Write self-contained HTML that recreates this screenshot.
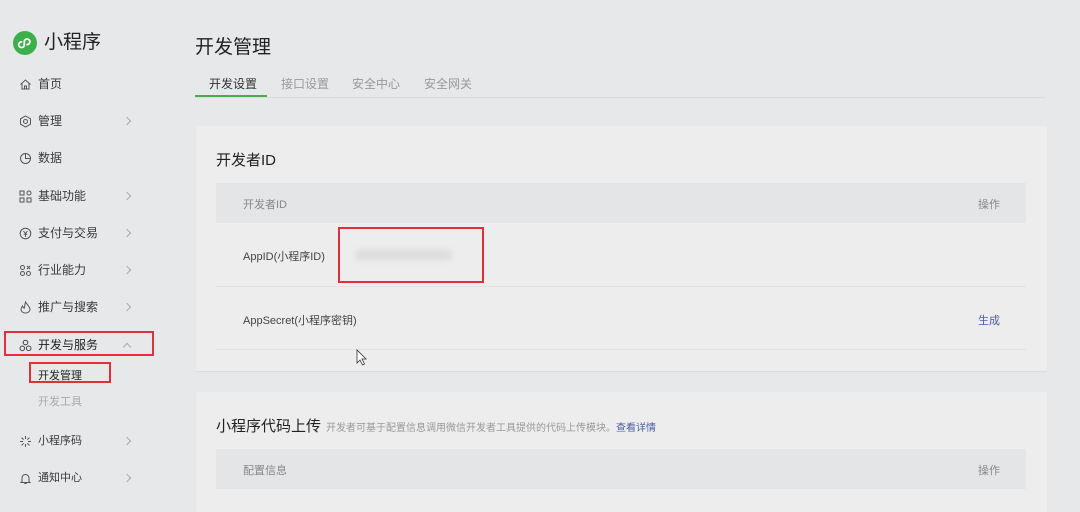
<!DOCTYPE html>
<html><head><meta charset="utf-8"><style>
*{margin:0;padding:0;box-sizing:border-box}
body{width:1080px;height:500px;background:#e7e8ea;font-family:"Liberation Sans","Noto Sans CJK SC",sans-serif;position:relative;overflow:hidden;color:#333}
.a{position:absolute;white-space:nowrap}
.nav{font-size:12px;color:#3a3a3a;left:38px;line-height:14px}
.ic{position:absolute;left:19px;width:13px;height:13px}
.chev{position:absolute;left:124px;width:6px;height:6px;border-right:1px solid #aaa;border-top:1px solid #aaa;transform:rotate(45deg)}
.card{position:absolute;left:196px;width:851px;background:#ededed;box-shadow:0 1px 1px rgba(0,0,0,.06)}
.th{position:absolute;left:20px;width:810px;height:40px;background:#e4e5e7}
.red{position:absolute;border:2px solid #e0303c}
</style></head><body>
<svg class="a" style="left:13px;top:31px" width="24" height="24" viewBox="0 0 24 24"><circle cx="12" cy="12" r="12" fill="#3cb04a"/><path d="M8.5 16.5a2.8 2.8 0 1 1 0-5.6 M8.5 16.5c1.8 0 2.8-1.2 2.8-2.8v-2.9c0-1.6 1.1-2.8 2.8-2.8a2.8 2.8 0 1 1 0 5.6" stroke="#fff" stroke-width="1.8" fill="none" stroke-linecap="round"/></svg>
<div class="a" style="left:44px;top:31px;font-size:19px;line-height:24px;color:#222">小程序</div>

<svg class="ic" style="top:78px" viewBox="0 0 13 13"><path d="M1.5 6.5L6.5 2l5 4.5M3 5.5V11h7V5.5M5.5 11V8h2v3" stroke="#555" fill="none"/></svg>
<div class="a nav" style="top:77px">首页</div>
<svg class="ic" style="top:115px" viewBox="0 0 13 13"><path d="M6.5 1l5 2.8v5.4l-5 2.8-5-2.8V3.8z" stroke="#555" fill="none"/><circle cx="6.5" cy="6.5" r="2" stroke="#555" fill="none"/></svg>
<div class="a nav" style="top:114px">管理</div><div class="chev" style="top:118px"></div>
<svg class="ic" style="top:152px" viewBox="0 0 13 13"><circle cx="6.5" cy="6.5" r="5" stroke="#555" fill="none"/><path d="M6.5 1.5v5h5" stroke="#555" fill="none"/></svg>
<div class="a nav" style="top:151px">数据</div>
<svg class="ic" style="top:190px" viewBox="0 0 13 13"><rect x="1" y="1" width="4" height="4" stroke="#555" fill="none"/><rect x="1" y="8" width="4" height="4" stroke="#555" fill="none"/><rect x="8" y="8" width="4" height="4" stroke="#555" fill="none"/><circle cx="10" cy="3" r="2" stroke="#555" fill="none"/></svg>
<div class="a nav" style="top:189px">基础功能</div><div class="chev" style="top:193px"></div>
<svg class="ic" style="top:227px" viewBox="0 0 13 13"><circle cx="6.5" cy="6.5" r="5.3" stroke="#555" fill="none"/><path d="M4.5 4l2 2.5 2-2.5M6.5 6.5V10M4.7 7.3h3.6" stroke="#555" fill="none"/></svg>
<div class="a nav" style="top:226px">支付与交易</div><div class="chev" style="top:230px"></div>
<svg class="ic" style="top:264px" viewBox="0 0 13 13"><circle cx="3.5" cy="3.5" r="2" stroke="#555" fill="none"/><circle cx="9.5" cy="9.5" r="2" stroke="#555" fill="none"/><circle cx="3.5" cy="9.5" r="2" stroke="#555" fill="none"/><path d="M8 2l3 3M11 2L8 5" stroke="#555"/></svg>
<div class="a nav" style="top:263px">行业能力</div><div class="chev" style="top:267px"></div>
<svg class="ic" style="top:301px" viewBox="0 0 13 13"><path d="M6.5 1C8 4 11 5.5 11 8.5a4.5 3.5 0 0 1-9 0C2 7 3 6 3.5 5c.5 1.5 1.5 2 2 2C5.5 5 6 3 6.5 1z" stroke="#555" fill="none"/></svg>
<div class="a nav" style="top:300px">推广与搜索</div><div class="chev" style="top:304px"></div>
<svg class="ic" style="top:339px" viewBox="0 0 13 13"><circle cx="6.5" cy="3.5" r="2.3" stroke="#444" fill="none"/><circle cx="3.3" cy="9.3" r="2.3" stroke="#444" fill="none"/><circle cx="9.7" cy="9.3" r="2.3" stroke="#444" fill="none"/></svg>
<div class="a nav" style="top:338px;color:#222">开发与服务</div><div class="chev" style="top:344px;transform:rotate(-45deg)"></div>
<div class="a" style="left:38px;top:367px;font-size:11px;color:#222">开发管理</div>
<div class="a" style="left:38px;top:393px;font-size:11px;color:#aaa">开发工具</div>
<svg class="ic" style="top:435px" viewBox="0 0 13 13"><path d="M6.5 1v3M6.5 9v3M1 6.5h3M9 6.5h3M2.6 2.6l2 2M8.4 8.4l2 2M2.6 10.4l2-2M8.4 4.6l2-2" stroke="#555"/></svg>
<div class="a nav" style="top:434px;font-size:11px">小程序码</div><div class="chev" style="top:438px"></div>
<svg class="ic" style="top:472px" viewBox="0 0 13 13"><path d="M3 9.5V6a3.5 3.5 0 0 1 7 0v3.5l1 1H2zM5.3 11.5h2.4" stroke="#555" fill="none"/></svg>
<div class="a nav" style="top:471px;font-size:11px">通知中心</div><div class="chev" style="top:475px"></div>

<div class="red" style="left:4px;top:331px;width:150px;height:25px"></div>
<div class="red" style="left:29px;top:362px;width:82px;height:21px"></div>

<div class="a" style="left:195px;top:32px;font-size:19px;color:#222">开发管理</div>
<div class="a" style="left:195px;top:97px;width:850px;height:1px;background:#dcdcde"></div>
<div class="a" style="left:209px;top:75px;font-size:12px;color:#333">开发设置</div>
<div class="a" style="left:195px;top:95px;width:72px;height:2px;background:#4bab4f"></div>
<div class="a" style="left:281px;top:75px;font-size:12px;color:#999">接口设置</div>
<div class="a" style="left:352px;top:75px;font-size:12px;color:#999">安全中心</div>
<div class="a" style="left:424px;top:75px;font-size:12px;color:#999">安全网关</div>

<div class="card" style="top:126px;height:245px">
  <div class="a" style="left:20px;top:23px;font-size:15px;color:#222">开发者ID</div>
  <div class="th" style="top:57px"></div>
  <div class="a" style="left:47px;top:70px;font-size:11px;color:#888">开发者ID</div>
  <div class="a" style="left:782px;top:70px;font-size:11px;color:#888">操作</div>
  <div class="a" style="left:47px;top:122px;font-size:11px;color:#444">AppID(小程序ID)</div>
  <div class="a" style="left:160px;top:124px;width:95px;height:10px;background:#dcdcdc;filter:blur(3px)"></div>
  <div class="a" style="left:20px;top:160px;width:810px;height:1px;background:#e2e2e2"></div>
  <div class="a" style="left:47px;top:186px;font-size:11px;color:#444">AppSecret(小程序密钥)</div>
  <div class="a" style="left:782px;top:186px;font-size:11px;color:#4a5ea0">生成</div>
  <div class="a" style="left:20px;top:223px;width:810px;height:1px;background:#e2e2e2"></div>
</div>
<div class="red" style="left:338px;top:227px;width:146px;height:56px"></div>
<svg class="a" style="left:356px;top:349px" width="12" height="18" viewBox="0 0 12 18"><path d="M1 1v13l3-3 2.5 5 2-1-2.5-5H10z" fill="#fff" stroke="#333" stroke-width="0.8"/></svg>

<div class="card" style="top:392px;height:120px">
  <div class="a" style="left:20px;top:23px;font-size:15px;color:#222">小程序代码上传</div>
  <div class="a" style="left:130px;top:27px;font-size:10px;color:#999">开发者可基于配置信息调用微信开发者工具提供的代码上传模块。<span style="color:#4a5ea0">查看详情</span></div>
  <div class="th" style="top:57px"></div>
  <div class="a" style="left:47px;top:70px;font-size:11px;color:#888">配置信息</div>
  <div class="a" style="left:782px;top:70px;font-size:11px;color:#888">操作</div>
</div>
</body></html>
